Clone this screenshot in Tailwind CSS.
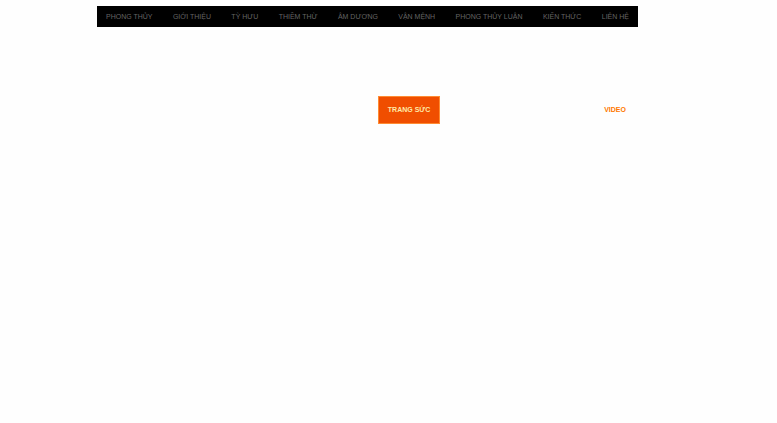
<!DOCTYPE html>
<html lang="vi">
<head>
<meta charset="utf-8">
<meta name="viewport" content="width=device-width, initial-scale=1">
<title>Phong Thủy</title>
<script src="https://cdn.jsdelivr.net/npm/@tailwindcss/browser@4"></script>
</head>
<body class="min-h-screen bg-[#fefefe] pt-1.5 pr-[139px] pl-[97px] font-['Liberation_Sans',Arial,sans-serif] text-[7px] leading-[21px]">
<header>
  <nav aria-label="Menu chính" class="bg-black px-[9px] text-[#646464]">
    <ul class="flex justify-between whitespace-nowrap">
      <li><a href="#">PHONG THỦY</a></li>
      <li><a href="#">GIỚI THIỆU</a></li>
      <li><a href="#">TỲ HƯU</a></li>
      <li><a href="#">THIỀM THỪ</a></li>
      <li><a href="#">ÂM DƯƠNG</a></li>
      <li><a href="#">VẬN MỆNH</a></li>
      <li><a href="#">PHONG THỦY LUẬN</a></li>
      <li><a href="#">KIẾN THỨC</a></li>
      <li><a href="#">LIÊN HỆ</a></li>
    </ul>
  </nav>
  <nav aria-label="Danh mục" class="mt-[69px] flex items-center justify-end gap-[164px] pr-3 leading-5 font-bold whitespace-nowrap">
    <a href="#" class="border border-[#ff8b32] bg-[#f04e00] px-[9px] py-[3px] text-[#ffe9a8]">TRANG SỨC</a>
    <a href="#" class="text-[#ff7800]">VIDEO</a>
  </nav>
</header>
</body>
</html>
